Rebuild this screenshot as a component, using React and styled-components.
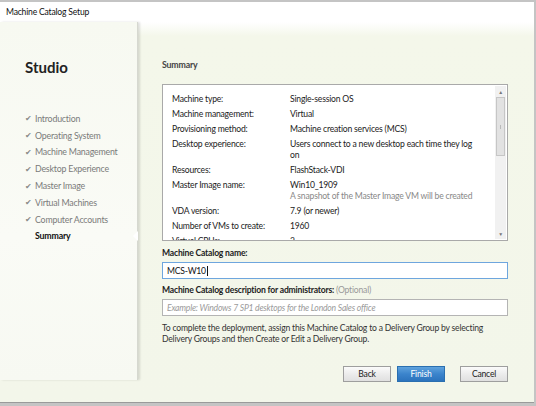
import React from "react";
import styled, { createGlobalStyle } from "styled-components";

const Global = createGlobalStyle`
  html, body { margin: 0; padding: 0; }
  body {
    background: #c4c4c4;
    font-family: "Lato", "Noto Sans", sans-serif;
    letter-spacing: -0.2px;
    width: 536px; height: 406px; overflow: hidden;
  }
`;

const Window = styled.div`
  margin-top: 2px;
  width: 534px;
  height: 401px;
  display: flex;
  flex-direction: column;
  background: #fff;
  border-bottom: 1px solid #9a9a9a;
  box-sizing: border-box;
`;

const TitleBar = styled.div`
  height: 20px;
  display: flex;
  align-items: center;
  padding-left: 6px;
  font-size: 8.6px;
  color: #111;
  background: #fff;
`;

const Body = styled.div`
  flex: 1;
  display: flex;
  background: linear-gradient(180deg, #ffffff 0px, #f4f7ea 14px, #f3f6ea 100%);
`;

const Sidebar = styled.div`
  width: 138px;
  height: 358px;
  position: relative;
  background: linear-gradient(180deg, #f7f9f1 0px, #fafbf6 60%, #f7f9f2 100%);
  box-shadow: 2px 0 2px rgba(0,0,0,0.12);
  border-right: 1px solid #d6d8d0;
  padding: 36px 0 0 25px;
  box-sizing: border-box;
`;

const Brand = styled.div`
  font-size: 15px;
  font-weight: 700;
  letter-spacing: 0;
  color: #222;
  margin-bottom: 34px;
`;

const NavList = styled.div`
  display: flex;
  flex-direction: column;
`;

const NavItem = styled.div`
  height: 16.8px;
  display: flex;
  align-items: center;
  font-size: 8.8px;
  color: ${p => (p.$active ? "#111" : "#7a7a7a")};
  font-weight: ${p => (p.$active ? 700 : 400)};
  padding-left: ${p => (p.$active ? "10px" : "0")};
`;

const Check = styled.span`
  width: 10px;
  color: #8a8a8a;
  font-size: 8px;
`;

const Notch = styled.div`
  position: absolute;
  right: -1px;
  top: 209px;
  width: 0; height: 0;
  border-top: 5px solid transparent;
  border-bottom: 5px solid transparent;
  border-right: 5px solid #fff;
`;

const Main = styled.div`
  flex: 1;
  padding: 37px 26px 0 24px;
  display: flex;
  flex-direction: column;
`;

const Heading = styled.div`
  font-size: 8.8px;
  font-weight: 700;
  color: #444;
  height: 14px;
  margin-bottom: 11px;
`;

const SummaryBox = styled.div`
  height: 157px;
  border: 1px solid #a9a9a9;
  background: #fff;
  display: flex;
  overflow: hidden;
  box-sizing: border-box;
`;

const Rows = styled.div`
  flex: 1;
  padding: 9px 0 0 9px;
  display: grid;
  grid-template-columns: 118px 1fr;
  grid-auto-rows: min-content;
  row-gap: 3.4px;
  font-size: 8.6px;
  color: #222;
  line-height: 11.5px;
  overflow: hidden;
`;

const Label = styled.div``;
const Value = styled.div`
  max-width: 186px;
`;
const Sub = styled.div`
  color: #888;
  white-space: nowrap;
`;

const ScrollBar = styled.div`
  width: 11px;
  margin: 1px 1px 1px 0;
  display: flex;
  flex-direction: column;
  align-items: stretch;
  background: #f1f1f1;
`;

const Arrow = styled.div`
  height: 11px;
  display: flex;
  align-items: center;
  justify-content: center;
  color: #777;
  font-size: 5px;
`;

const Thumb = styled.div`
  height: 59px;
  margin: 0 1px;
  background: #e2e2e2;
  border: 1px solid #c6c6c6;
  box-sizing: border-box;
  display: flex;
  align-items: center;
  justify-content: center;
`;

const Grip = styled.div`
  width: 1px; height: 4px; background: #b9b9b9;
`;

const Track = styled.div`flex: 1;`;

const FieldLabel = styled.div`
  margin-top: ${p => p.$mt || 7}px;
  font-size: 8.6px;
  font-weight: 700;
  color: #222;
  height: 13px;
  line-height: 13px;
`;

const Optional = styled.span`
  font-weight: 400;
  color: #999;
`;

const Input = styled.div`
  margin-top: 2px;
  height: 17px;
  box-sizing: border-box;
  border: 1px solid ${p => (p.$focus ? "#6ea6de" : "#b4b4b4")};
  background: #fff;
  display: flex;
  align-items: center;
  padding-left: 4px;
  font-size: 8.6px;
  color: ${p => (p.$placeholder ? "#9a9a9a" : "#111")};
  font-style: ${p => (p.$placeholder ? "italic" : "normal")};
`;

const Caret = styled.span`
  display: inline-block;
  width: 1px;
  height: 10px;
  background: #111;
  margin-left: 1px;
`;

const Note = styled.div`
  margin-top: 7px;
  font-size: 8.6px;
  line-height: 11.3px;
  color: #333;
`;

const Buttons = styled.div`
  margin-top: 20px;
  display: flex;
  justify-content: flex-end;
`;

const Button = styled.div`
  width: 48px;
  height: 16px;
  box-sizing: border-box;
  margin-left: ${p => p.$gap || 0}px;
  display: flex;
  align-items: center;
  justify-content: center;
  font-size: 8.6px;
  border: 1px solid ${p => (p.$primary ? "#2a6fb0" : "#9e9e9e")};
  color: ${p => (p.$primary ? "#fff" : "#222")};
  background: ${p =>
    p.$primary
      ? "linear-gradient(180deg, #5fa2dd 0%, #3b84cc 50%, #2c73bd 100%)"
      : "linear-gradient(180deg, #fbfbfb 0%, #ececec 50%, #e0e0e0 100%)"};
`;

const rows = [
  ["Machine type:", "Single-session OS"],
  ["Machine management:", "Virtual"],
  ["Provisioning method:", "Machine creation services (MCS)"],
  ["Desktop experience:", "Users connect to a new desktop each time they log on"],
  ["Resources:", "FlashStack-VDI"],
  ["Master Image name:", "Win10_1909", "A snapshot of the Master Image VM will be created"],
  ["VDA version:", "7.9 (or newer)"],
  ["Number of VMs to create:", "1960"],
  ["Virtual CPUs:", "2"],
];

const nav = [
  "Introduction",
  "Operating System",
  "Machine Management",
  "Desktop Experience",
  "Master Image",
  "Virtual Machines",
  "Computer Accounts",
];

export default function App() {
  return (
    <>
      <Global />
      <Window>
        <TitleBar>Machine Catalog Setup</TitleBar>
        <Body>
          <Sidebar>
            <Brand>Studio</Brand>
            <NavList>
              {nav.map(n => (
                <NavItem key={n}>
                  <Check>✔</Check>
                  {n}
                </NavItem>
              ))}
              <NavItem $active>Summary</NavItem>
            </NavList>
            <Notch />
          </Sidebar>
          <Main>
            <Heading>Summary</Heading>
            <SummaryBox>
              <Rows>
                {rows.map(r => (
                  <React.Fragment key={r[0]}>
                    <Label>{r[0]}</Label>
                    <Value>
                      {r[1]}
                      {r[2] && <Sub>{r[2]}</Sub>}
                    </Value>
                  </React.Fragment>
                ))}
              </Rows>
              <ScrollBar>
                <Arrow>▲</Arrow>
                <Thumb><Grip /></Thumb>
                <Track />
                <Arrow>▼</Arrow>
              </ScrollBar>
            </SummaryBox>
            <FieldLabel $mt={6}>Machine Catalog name:</FieldLabel>
            <Input $focus>MCS-W10<Caret /></Input>
            <FieldLabel $mt={5}>
              Machine Catalog description for administrators: <Optional>(Optional)</Optional>
            </FieldLabel>
            <Input $placeholder>Example: Windows 7 SP1 desktops for the London Sales office</Input>
            <Note>
              To complete the deployment, assign this Machine Catalog to a Delivery Group by selecting
              Delivery Groups and then Create or Edit a Delivery Group.
            </Note>
            <Buttons>
              <Button>Back</Button>
              <Button $primary $gap={6}>Finish</Button>
              <Button $gap={15}>Cancel</Button>
            </Buttons>
          </Main>
        </Body>
      </Window>
    </>
  );
}
